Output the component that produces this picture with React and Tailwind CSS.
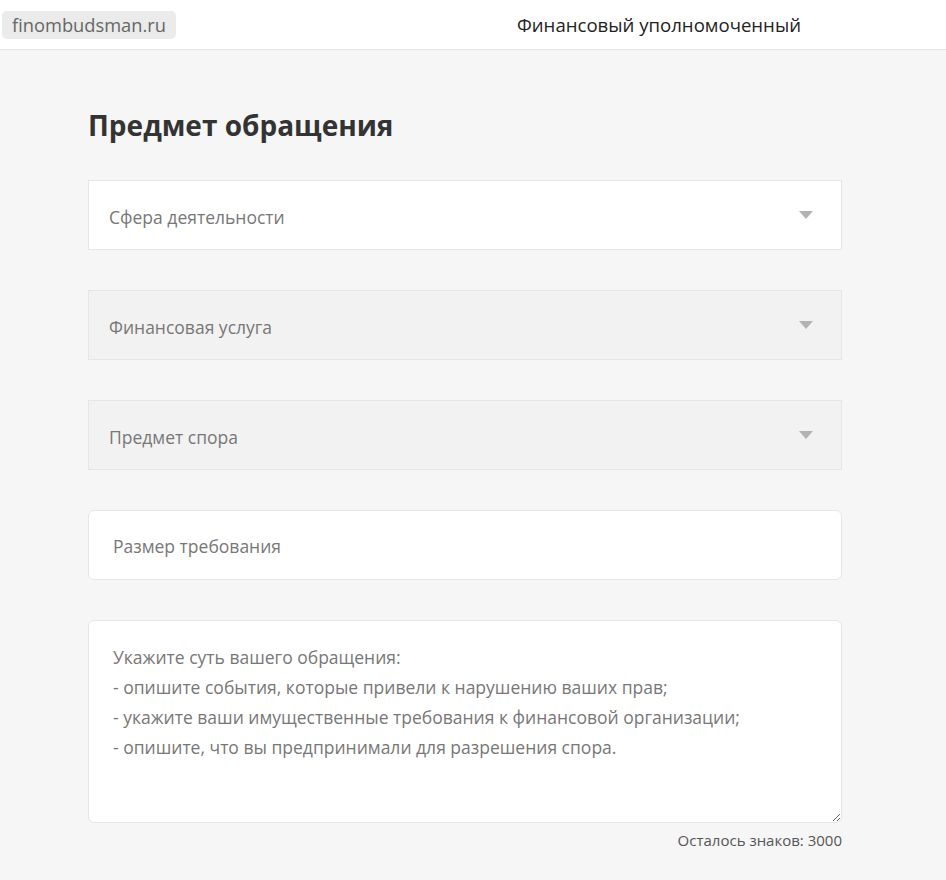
import React from "react";

const font = { fontFamily: '"Open Sans", "Liberation Sans", sans-serif' };

const Arrow = () => (
	<svg width="14" height="8" viewBox="0 0 14 8" className="shrink-0">
		<path d="M0 0 L14 0 L7 8 Z" fill="#b3b3b3" />
	</svg>
);

const SelectField = ({ label, disabled }) => (
	<div
		className={
			disabled
				? "flex h-[70px] items-center justify-between border border-[#e6e6e6] bg-[#f2f2f2] pl-5 pr-7"
				: "flex h-[70px] items-center justify-between border border-[#e6e6e6] bg-white pl-5 pr-7"
		}>
		<span className="pt-[5px] text-[17.5px] text-[#777]">{label}</span>
		<Arrow />
	</div>
);

const App = () => {
	return (
		<div className="min-h-[880px] bg-[#f6f6f6]" style={font}>
			<header className="flex h-[50px] items-center border-b border-[#e3e3e3] bg-white">
				<div className="ml-[2px] flex h-[28px] items-center rounded-[5px] bg-[#ebebeb] px-[10px] text-[18.3px] text-[#666]">
					finombudsman.ru
				</div>
				<div className="ml-[341px] text-[18.6px] text-[#222]">
					Финансовый уполномоченный
				</div>
			</header>

			<main className="w-[754px] ml-[88px] pt-[55px]">
				<h1 className="mb-[35px] text-[28px] font-bold leading-[40px] text-[#333]">
					Предмет обращения
				</h1>

				<div className="flex flex-col gap-[40px]">
					<SelectField label="Сфера деятельности" />
					<SelectField label="Финансовая услуга" disabled />
					<SelectField label="Предмет спора" disabled />
					<input
						type="text"
						placeholder="Размер требования"
						className="h-[70px] rounded-[6px] border border-[#e6e6e6] bg-white px-6 pt-[2px] text-[17.5px] text-[#333] outline-none placeholder:text-[#777]"
					/>
					<div>
						<textarea
							placeholder={
								"Укажите суть вашего обращения:\n- опишите события, которые привели к нарушению ваших прав;\n- укажите ваши имущественные требования к финансовой организации;\n- опишите, что вы предпринимали для разрешения спора."
							}
							className="block h-[203px] w-full rounded-[6px] border border-[#e6e6e6] bg-white px-6 pt-[21px] text-[17.5px] leading-[30px] text-[#333] outline-none placeholder:text-[#777]"
						/>
						<div className="mt-[6px] text-right text-[15px] text-[#555]">
							Осталось знаков: 3000
						</div>
					</div>
				</div>
			</main>
		</div>
	);
};

export default App;
